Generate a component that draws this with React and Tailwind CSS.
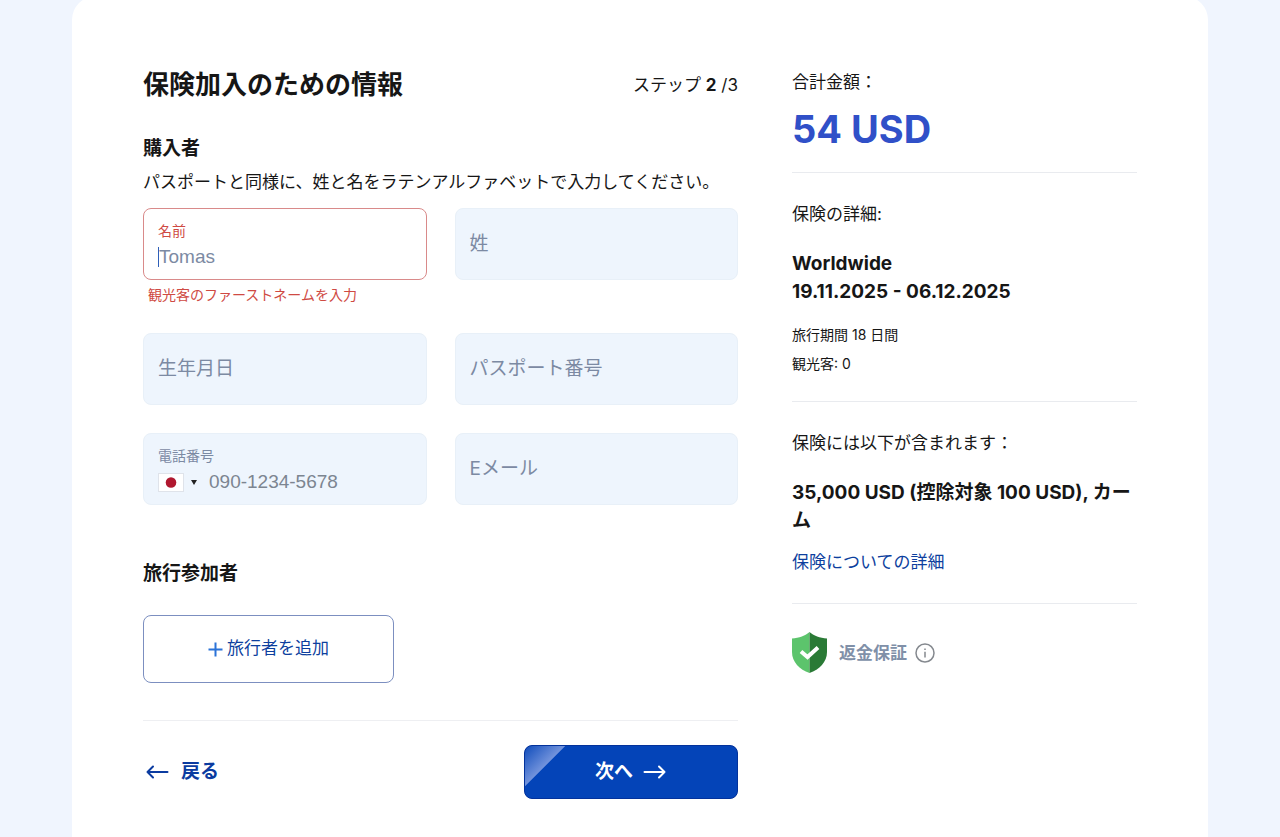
import { useState } from 'react';

const PLACEHOLDER_FONT = "font-['Liberation_Sans','Noto_Sans_CJK_JP',sans-serif]";

function Field({ id, label, type = 'text' }) {
    const [value, setValue] = useState('');

    return (
        <div className="grid h-18 rounded-lg bg-[#eef5fd] border border-[#e8f0f8]">
            <input
                id={id}
                type={type}
                value={value}
                onChange={(e) => setValue(e.target.value)}
                className="[grid-area:1/1] w-full min-w-0 px-[14px] rounded-lg bg-transparent text-[19px] text-[#1c1c1c] outline-none"
            />
            <label
                htmlFor={id}
                className={`[grid-area:1/1] self-center px-[14px] text-[19px] leading-7 text-[#7c8aa3] pointer-events-none ${value ? 'invisible' : ''}`}
            >
                {label}
            </label>
        </div>
    );
}

function ArrowIcon({ className }) {
    return (
        <svg className={className} width="24" height="16" viewBox="0 0 24 16" fill="none" stroke="currentColor" strokeWidth="2" strokeLinecap="round" strokeLinejoin="round">
            <path d="M1.500 8h20M16 2.500l5.500 5.500-5.500 5.500" />
        </svg>
    );
}

function ShieldIcon() {
    return (
        <svg width="35" height="41" viewBox="0 0 35 41">
            <path d="M17.500 0C13.500 3.500 7 6 0 6.500V20c0 10 7.500 17.500 17.500 21z" fill="#5cc46c" />
            <path d="M17.500 0C21.500 3.500 28 6 35 6.500V20c0 10-7.500 17.500-17.500 21z" fill="#2a7a36" />
            <path d="M9 19.500l6.500 5.500L26 15.500" fill="none" stroke="#fff" strokeWidth="4" />
        </svg>
    );
}

function PurchaseForm() {
    const [firstName, setFirstName] = useState('');
    const [phone, setPhone] = useState('');

    return (
        <form onSubmit={(e) => e.preventDefault()}>
            <div className="flex items-center justify-between">
                <h1 className="text-[26px] leading-9 font-bold">保険加入のための情報</h1>
                <p className="text-[17px] leading-[26px]">
                    ステップ <b>2</b> /3
                </p>
            </div>

            <h2 className="mt-8 text-[19px] leading-7 font-bold">購入者</h2>
            <p className="mt-[6px] text-[17px] leading-[26px]">
                パスポートと同様に、姓と名をラテンアルファベットで入力してください。
            </p>

            <div className="mt-[13px] grid grid-cols-2 gap-7">
                <div>
                    <div className="flex h-18 flex-col justify-center rounded-lg border border-[#d98a8a] bg-white px-[14px]">
                        <label htmlFor="firstName" className="text-sm leading-[26px] text-[#cf4a43]">
                            名前
                        </label>
                        <div className="flex items-center">
                            {!firstName && <span className="h-5 w-px bg-[#2f5fb8]" />}
                            <input
                                id="firstName"
                                type="text"
                                placeholder="Tomas"
                                value={firstName}
                                onChange={(e) => setFirstName(e.target.value)}
                                className={`h-[26px] w-full min-w-0 bg-transparent text-[19px] outline-none placeholder:text-[#7c8aa3] ${PLACEHOLDER_FONT}`}
                            />
                        </div>
                    </div>
                    <p className="mt-1 pl-[5px] text-sm leading-[21px] text-[#cf4a43]">観光客のファーストネームを入力</p>
                </div>
                <div>
                    <Field id="lastName" label="姓" />
                </div>
                <Field id="birthDate" label="生年月日" />
                <Field id="passport" label="パスポート番号" />
                <div className="flex h-18 flex-col justify-center rounded-lg border border-[#e8f0f8] bg-[#eef5fd] px-[14px]">
                    <label htmlFor="phone" className="text-sm leading-[26px] text-[#7c8aa3]">
                        電話番号
                    </label>
                    <div className="flex items-center">
                        <button type="button" aria-label="日本" className="flex shrink-0 items-center gap-[7px]">
                            <svg width="26" height="19" viewBox="0 0 26 19">
                                <rect x="0.500" y="0.500" width="25" height="18" fill="#fff" stroke="#dfe3ea" />
                                <circle cx="13" cy="9.500" r="5.300" fill="#b0182f" />
                            </svg>
                            <svg width="6" height="5" viewBox="0 0 6 5">
                                <path d="M0 0h6L3 5z" fill="#222" />
                            </svg>
                        </button>
                        <input
                            id="phone"
                            type="tel"
                            placeholder="090-1234-5678"
                            value={phone}
                            onChange={(e) => setPhone(e.target.value)}
                            className={`ml-3 h-[26px] w-full min-w-0 bg-transparent text-[19px] outline-none placeholder:text-[#7c8591] ${PLACEHOLDER_FONT}`}
                        />
                    </div>
                </div>
                <Field id="email" label="Eメール" type="email" />
            </div>

            <h2 className="mt-[55px] text-[19px] leading-7 font-bold">旅行参加者</h2>
            <button
                type="button"
                className="mt-[27px] flex h-17 w-[251px] items-center justify-center gap-1 rounded-lg border border-[#7c8fc0] text-[17px] text-[#0d3f9e]"
            >
                <svg width="15" height="15" viewBox="0 0 15 15" stroke="#2b73d8" strokeWidth="2">
                    <path d="M7.500 0.500v14M0.500 7.500h14" />
                </svg>
                旅行者を追加
            </button>

            <div className="mt-[37px] flex items-center justify-between border-t border-[#eeeff2] pt-6">
                <a href="#back" className="flex items-center gap-3 pl-[2px] text-[19px] leading-7 font-bold text-[#0b3ba0]">
                    <ArrowIcon className="rotate-180" />
                    戻る
                </a>
                <button
                    type="submit"
                    className="flex h-[54px] w-[214px] items-center justify-center gap-[10px] rounded-lg border border-[#03329b] bg-[#0444b8] bg-[linear-gradient(135deg,#0f4cbb_0px,#7293dc_28px,#0444b8_29px)] text-[19px] font-bold text-white"
                >
                    次へ
                    <ArrowIcon />
                </button>
            </div>
        </form>
    );
}

function Summary() {
    return (
        <aside className="pt-[2px] text-[17px] leading-[26px]">
            <p>合計金額：</p>
            <p className="mt-[10px] text-[38px] leading-12 font-bold text-[#3050c8]">54 USD</p>

            <section className="mt-[19px] border-t border-[#e9ebef] pt-7">
                <p>保険の詳細:</p>
                <p className="mt-[23px] text-[19px] leading-7 font-bold">
                    Worldwide
                    <br />
                    19.11.2025 - 06.12.2025
                </p>
                <p className="mt-[14px] text-sm leading-[29px]">
                    旅行期間 18 日間
                    <br />
                    観光客: 0
                </p>
            </section>

            <section className="mt-[23px] border-t border-[#e9ebef] pt-7">
                <p>保険には以下が含まれます：</p>
                <p className="mt-[23px] text-[19px] leading-7 font-bold">35,000 USD (控除対象 100 USD), カーム</p>
                <a href="#details" className="mt-[14px] block text-[#0d3f9e]">
                    保険についての詳細
                </a>
            </section>

            <div className="mt-7 flex items-center border-t border-[#e9ebef] pt-7">
                <ShieldIcon />
                <b className="ml-3 text-[#8090a8]">返金保証</b>
                <button type="button" aria-label="返金保証" className="ml-2">
                    <svg width="20" height="20" viewBox="0 0 20 20" fill="none" stroke="#85898f" strokeWidth="1.500">
                        <circle cx="10" cy="10" r="9" />
                        <path d="M10 8.800V14.500M10 5.500V7.100" />
                    </svg>
                </button>
            </div>
        </aside>
    );
}

function App() {
    return (
        <div className="flex min-h-screen flex-col bg-[#f0f5fe] px-[72px] font-[Inter,'Noto_Sans_CJK_JP',sans-serif] text-[#161616]" lang="ja">
            <main className="-mt-1 grid flex-1 grid-cols-[595fr_345fr] items-start gap-[54px] rounded-t-3xl bg-white px-[71px] pt-[71px] pb-10">
                <PurchaseForm />
                <Summary />
            </main>
        </div>
    );
}

export default App;
